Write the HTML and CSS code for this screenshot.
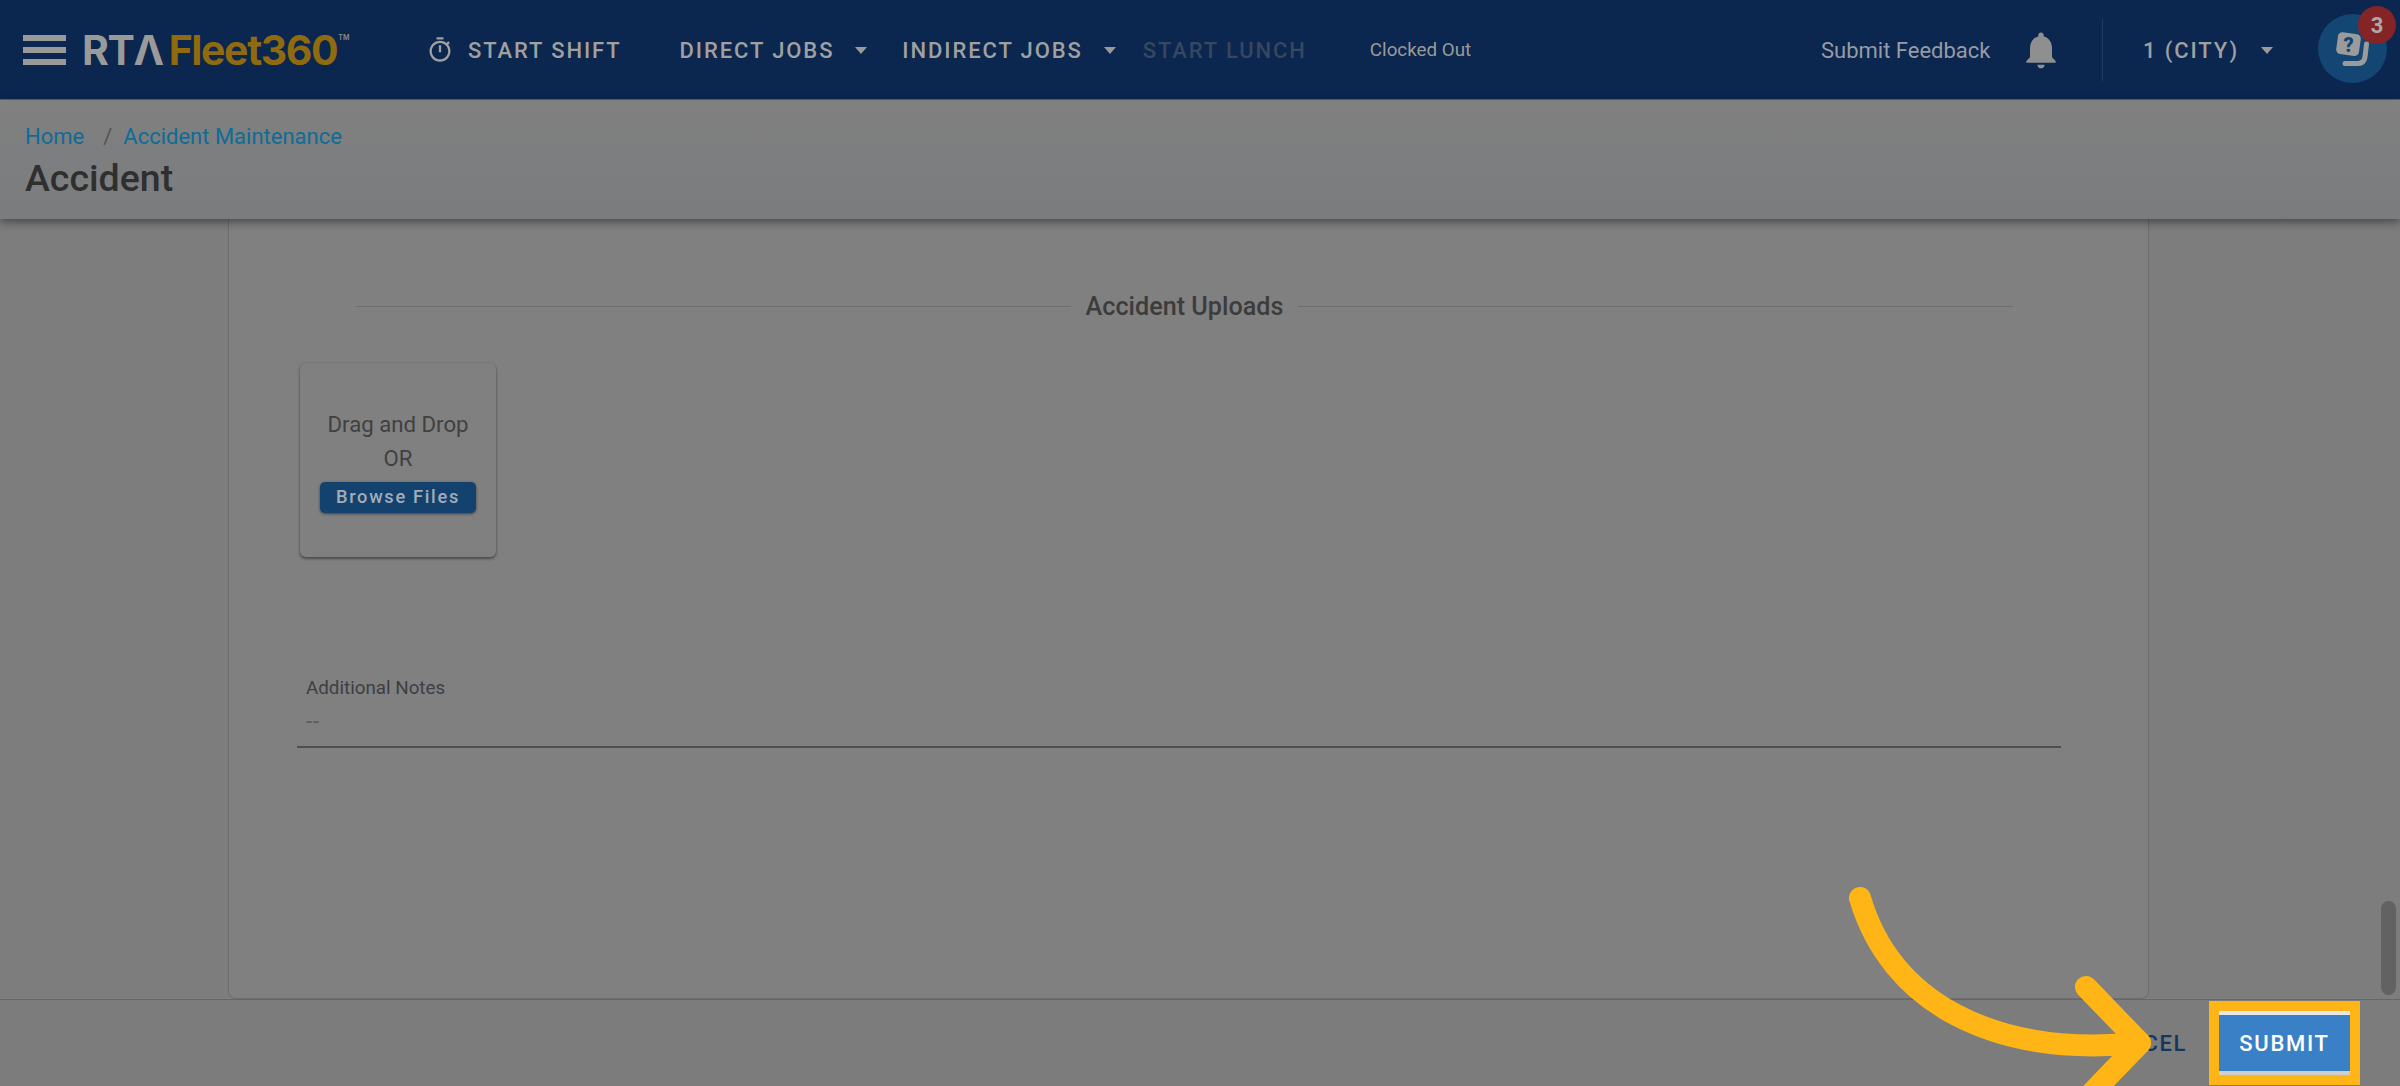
FILE: index.html
```html
<!DOCTYPE html>
<html lang="en">
<head>
<meta charset="utf-8">
<title>Accident</title>
<link rel="stylesheet" href="styles.css">
</head>
<body>
<div class="app">
  <header class="topbar">
    <div class="hamburger"><span></span><span></span><span></span></div>
    <div class="logo"><span class="logo-rta">RTΛ</span><span class="logo-fleet">Fleet360</span><span class="logo-tm">TM</span></div>
    <nav class="nav">
      <div class="nav-item shift">
        <svg class="timer" viewBox="0 0 24 24"><path d="M15 1H9v2h6V1zm-4 13h2V8h-2v6zm8.03-6.61l1.42-1.42c-.43-.51-.9-.99-1.41-1.41l-1.42 1.42C16.07 4.74 14.12 4 12 4c-4.97 0-9 4.03-9 9s4.02 9 9 9 9-4.03 9-9c0-2.12-.74-4.07-1.97-5.61zM12 20c-3.87 0-7-3.13-7-7s3.13-7 7-7 7 3.13 7 7-3.13 7-7 7z"/></svg>
        <span>START SHIFT</span>
      </div>
      <div class="nav-item direct"><span>DIRECT JOBS</span><i class="caret"></i></div>
      <div class="nav-item indirect"><span>INDIRECT JOBS</span><i class="caret"></i></div>
      <div class="nav-item lunch"><span>START LUNCH</span></div>
      <div class="clocked">Clocked Out</div>
    </nav>
    <div class="right">
      <span class="feedback">Submit Feedback</span>
      <svg class="bell" viewBox="0 0 24 24"><path d="M12 22c1.1 0 2-.9 2-2h-4c0 1.1.89 2 2 2zm6-6v-5c0-3.07-1.64-5.64-4.5-6.32V4c0-.83-.67-1.5-1.5-1.5s-1.5.67-1.5 1.5v.68C7.63 5.36 6 7.92 6 11v5l-2 2v1h16v-1l-2-2z"/></svg>
      <div class="divider"></div>
      <div class="city"><span>1 (CITY)</span><i class="caret"></i></div>
    </div>
    <div class="help">
      <svg class="help-icon" viewBox="0 0 40 40">
        <path class="help-back" d="M33.500 14L32 27Q31 33.500 25 33.500H12"/>
        <rect class="help-front" x="4" y="3" width="23" height="22" rx="4.500" transform="rotate(8 15 14)"/>
        <text class="help-q" x="15.500" y="21.500">?</text>
      </svg>
      <span class="badge">3</span>
    </div>
  </header>

  <section class="subheader">
    <div class="crumbs"><a>Home</a><span class="sep">/</span><a>Accident Maintenance</a></div>
    <h1>Accident</h1>
  </section>

  <main class="content">
    <div class="card">
      <div class="legend"><span class="rule"></span><span class="legend-text">Accident Uploads</span><span class="rule"></span></div>
      <div class="upload">
        <div class="upload-line">Drag and Drop</div>
        <div class="upload-line">OR</div>
        <div class="browse">Browse Files</div>
      </div>
      <div class="notes">
        <div class="notes-label">Additional Notes</div>
        <div class="notes-value">--</div>
      </div>
    </div>
    <div class="scrollbar"></div>
  </main>

  <footer class="footer">
    <span class="cancel">CANCEL</span>
    <div class="highlight"><button class="submit">SUBMIT</button></div>
  </footer>

  <svg class="arrow" viewBox="0 0 2400 1086" width="2400" height="1086">
    <path d="M1860 898C1890 1000 1990 1058 2140 1043"/>
    <path d="M2086 987L2140 1043L2085 1100"/>
  </svg>
</div>
</body>
</html>
```
FILE: styles.css
```css
* { box-sizing: border-box; }
html, body { margin: 0; padding: 0; height: 100%; overflow: hidden; }
body { font-family: Roboto, "Liberation Sans", sans-serif; background: #7d7d7d; color: #3a3a3a; }
.app { position: relative; width: 2400px; height: 1086px; display: flex; flex-direction: column; overflow: hidden; }

/* top bar */
.topbar { position: relative; flex: 0 0 100px; height: 100px; display: flex; align-items: center; background: #0b264f; border-bottom: 1px solid #5a6474; padding-left: 23px; }
.hamburger { width: 43px; display: flex; flex-direction: column; gap: 6px; }
.hamburger span { display: block; height: 6px; background: #9a9a9a; }
.logo { margin-left: 16px; width: 285px; display: flex; align-items: flex-start; font-family: Inter, "Liberation Sans", sans-serif; font-weight: 700; font-size: 41px; line-height: 46px; letter-spacing: -1.400px; }
.logo-rta { color: #9a9a9a; }
.logo-fleet { color: #8f6a0e; margin-left: 6px; }
.logo-tm { color: #8a8a8a; font-size: 7px; font-weight: 600; line-height: 22px; letter-spacing: 0; margin-left: 1px; }
.nav { position: absolute; left: 428px; top: 0; height: 100px; display: flex; align-items: center; }
.nav-item { display: flex; align-items: center; font-size: 22px; font-weight: 500; letter-spacing: 1.900px; color: #a0a0a0; white-space: nowrap; }
.timer { width: 28px; height: 28px; fill: #a0a0a0; margin-left: -2px; margin-right: 14px; }
.direct { margin-left: 58px; }
.indirect { margin-left: 35px; }
.lunch { margin-left: 27px; color: #36475f; }
.clocked { margin-left: 63px; font-size: 18.800px; color: #9a9a9a; white-space: nowrap; }
.caret { display: inline-block; width: 0; height: 0; border-left: 6.500px solid transparent; border-right: 6.500px solid transparent; border-top: 7px solid #9a9a9a; margin-left: 21px; }
.right { position: absolute; left: 1821px; top: 0; height: 100px; display: flex; align-items: center; }
.feedback { font-size: 22px; color: #969ca4; white-space: nowrap; width: 170px; }
.bell { width: 44px; height: 44px; fill: #8f8f8f; margin-left: 28px; }
.divider { width: 1px; height: 62px; background: #23395d; margin-left: 39px; }
.city { display: flex; align-items: center; margin-left: 40px; font-size: 22px; font-weight: 500; letter-spacing: 1.900px; color: #a0a0a0; white-space: nowrap; }
.city .caret { margin-left: 22px; }
.help { position: absolute; left: 2318px; top: 14px; width: 69px; height: 69px; border-radius: 50%; background: #134673; }
.help-icon { position: absolute; left: 15px; top: 16px; width: 40px; height: 40px; }
.help-front { fill: #9b9b9b; }
.help-back { fill: none; stroke: #9b9b9b; stroke-width: 5; stroke-linecap: round; }
.help-q { fill: #134673; font-family: Roboto, sans-serif; font-weight: 900; font-size: 20px; text-anchor: middle; }
.badge { position: absolute; left: 40px; top: -8px; width: 38px; height: 38px; border-radius: 50%; background: #842426; color: #a9a9a9; font-size: 22px; font-weight: 700; display: flex; align-items: center; justify-content: center; }

/* breadcrumb band */
.subheader { position: relative; z-index: 2; flex: 0 0 119px; height: 119px; padding: 23px 25px 0; background: linear-gradient(#808080, #7a7c7e); box-shadow: 0 3px 9px rgba(0,0,0,.45); }
.crumbs { display: flex; align-items: center; font-size: 22px; line-height: 28px; color: #0f6c97; }
.sep { margin: 0 11px 0 19px; color: #555; }
h1 { margin: 4px 0 0; font-size: 37.500px; line-height: 46px; font-weight: 500; color: #2f2f2f; }

/* content */
.content { position: relative; flex: 1 1 auto; min-height: 0; background: #7d7d7d; }
.card { position: relative; height: 100%; margin: 0 251px 0 228px; background: #808080; border: 1px solid #6d6d6d; border-top: 0; border-radius: 0 0 8px 8px; padding-top: 68px; }
.legend { display: flex; align-items: center; margin: 0 135px 0 127px; gap: 15px; }
.rule { flex: 1 1 0; height: 1px; background: #6d6d6d; }
.legend-text { font-size: 25.200px; line-height: 39px; font-weight: 500; color: #3c3c3c; }
.upload { width: 196px; height: 194px; margin: 37px 0 0 71px; background: #808080; border-radius: 6px; box-shadow: 0 2px 3px rgba(0,0,0,.4), 0 0 2px rgba(0,0,0,.18); display: flex; flex-direction: column; align-items: center; padding-top: 44px; }
.upload-line { font-size: 22.200px; line-height: 34px; color: #414141; }
.browse { width: 156px; height: 31px; margin-top: 7px; background: #14426f; border-radius: 5px; box-shadow: 0 1px 3px rgba(0,0,0,.5); color: #a4acb6; font-size: 18.200px; font-weight: 500; letter-spacing: 1.700px; line-height: 29px; text-align: center; }
.notes { width: 1764px; height: 76px; margin: 115px 0 0 68px; border-bottom: 2px solid #4f4f4f; padding-left: 9px; padding-top: 3px; }
.notes-label { font-size: 18.800px; line-height: 26px; color: #3c3f44; }
.notes-value { margin-top: 9px; font-size: 22px; line-height: 24px; letter-spacing: 1px; color: #5a5a5a; }
.scrollbar { position: absolute; left: 2381px; top: 682px; width: 15px; height: 94px; border-radius: 8px; background: #626262; }

/* footer */
.footer { flex: 0 0 87px; height: 87px; display: flex; justify-content: flex-end; align-items: flex-start; background: #7c7c7c; border-top: 1px solid #666; padding: 1px 40px 0 0; }
.cancel { align-self: center; margin-right: 22px; font-size: 22px; font-weight: 500; letter-spacing: 1.600px; color: #14375f; }
.highlight { border: 10px solid #ffb515; }
.submit { display: block; width: 131px; height: 64px; padding: 0; border: 0; border-top: 4px solid #e6e6e6; border-bottom: 4px solid #cfcfcf; background: #3a80c6; color: #fff; font-family: Roboto, sans-serif; font-size: 22px; font-weight: 500; letter-spacing: 1.700px; }

/* annotation arrow */
.arrow { position: absolute; left: 0; top: 0; pointer-events: none; }
.arrow path { fill: none; stroke: #ffb515; stroke-width: 22; stroke-linecap: round; stroke-linejoin: round; }
```
